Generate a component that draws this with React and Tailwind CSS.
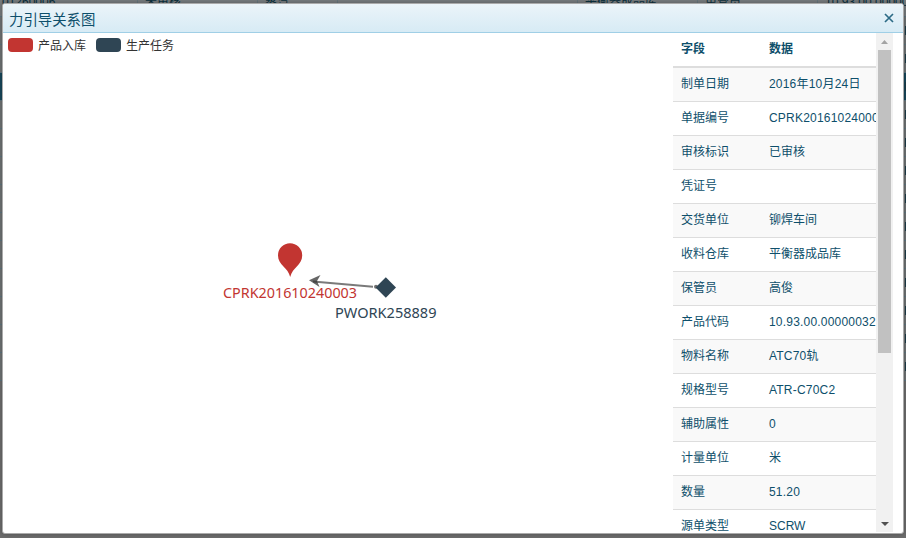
const rows = [
  ['制单日期', '2016年10月24日'],
  ['单据编号', 'CPRK201610240003'],
  ['审核标识', '已审核'],
  ['凭证号', ''],
  ['交货单位', '铆焊车间'],
  ['收料仓库', '平衡器成品库'],
  ['保管员', '高俊'],
  ['产品代码', '10.93.00.00000032'],
  ['物料名称', 'ATC70轨'],
  ['规格型号', 'ATR-C70C2'],
  ['辅助属性', '0'],
  ['计量单位', '米'],
  ['数量', '51.20'],
  ['源单类型', 'SCRW'],
];

// Dimmed page grid behind the dialog; the third full row is the selected one
function Backdrop() {
  const cell = 'h-[21px] shrink-0 border-r border-[#65757c] pl-[7px] whitespace-nowrap leading-[12px] -mt-[4px]';
  return (
    <div className="absolute inset-0 overflow-hidden bg-[#6d6d6d] text-[12px] text-[#0b2f3c]">
      <div className="flex h-[17px] border-b border-[#5c747f] bg-[#777c7e]">
        <div className={cell + ' w-[138px] !pl-[2px]'}>01260006</div>
        <div className={cell + ' w-[120px]'}>未审核</div>
        <div className={cell + ' w-[80px]'}>蒸汽</div>
        <div className={cell + ' w-[240px]'} />
        <div className={cell + ' w-[120px]'}>平衡器成品库</div>
        <div className={cell + ' w-[120px]'}>单管员</div>
        <div className={cell + ' w-[120px]'}>10.93.00.00000032</div>
      </div>
      {Array.from({ length: 13 }, (_, i) => (
        <div
          key={i}
          className={'flex h-[28px] items-center justify-end border-b border-[#5c747f] ' + (i === 2 ? 'bg-[#17475b]' : 'bg-[#6f7374]')}
        >
          <span className="h-[9px] w-px bg-[#1c3a46]" />
        </div>
      ))}
    </div>
  );
}

function Legend({ color, children }) {
  return (
    <div className="flex items-center gap-[5px]">
      <span className={'h-[14px] w-[25px] rounded-[4px] ' + color} />
      <span className="relative top-px w-[48px] whitespace-nowrap">{children}</span>
    </div>
  );
}

function Graph() {
  return (
    <svg className="block h-[278px] w-[670px] shrink-0 overflow-visible" viewBox="0 0 670 278" fontSize="15">
      <path d="M373 33.7 L313 28.4" stroke="#333" strokeOpacity="0.65" strokeWidth="2" fill="none" />
      <path d="M309 27.2 L320.5 22 L317 28 L319.5 34 Z" fill="#333" fillOpacity="0.75" />
      <circle cx="376" cy="33.8" r="2" fill="#333" fillOpacity="0.7" />
      <path
        d="M290 -9.8 A12.2 12.2 0 0 1 302.2 2.4 C302.2 12 292.5 14 290.2 24 C288 14 278 12 278 2.4 A12.2 12.2 0 0 1 290 -9.8 Z"
        fill="#c23531"
      />
      <path d="M385.8 24.2 L396 34.5 L385.8 44.8 L375.6 34.5 Z" fill="#2f4554" />
      <text x="223" y="45" fill="#c23531" textLength="134" lengthAdjust="spacingAndGlyphs">CPRK201610240003</text>
      <text x="335" y="65" fill="#2f4554" textLength="101.5" lengthAdjust="spacingAndGlyphs">PWORK258889</text>
    </svg>
  );
}

function Scrollbar() {
  return (
    <div className="flex w-[17px] shrink-0 flex-col items-center bg-[#f1f1f1]">
      <div className="flex h-[17px] items-center">
        <svg width="7" height="4" viewBox="0 0 7 4"><path d="M0 4 L3.5 0 L7 4Z" fill="#a3a3a3" /></svg>
      </div>
      <div className="h-[303px] w-[13px] bg-[#c1c1c1]" />
      <div className="mt-auto flex h-[17px] items-center">
        <svg width="8" height="4" viewBox="0 0 8 4"><path d="M0 0 L4 4 L8 0Z" fill="#505050" /></svg>
      </div>
    </div>
  );
}

export default function App() {
  return (
    <div className="relative h-[538px] w-[906px] overflow-hidden pt-[3px] pl-[2px] font-['Liberation_Sans','Noto_Sans_CJK_SC',sans-serif]">
      <Backdrop />
      <div className="relative flex h-[531px] w-[902px] flex-col overflow-hidden rounded-[3px] border border-[#aaa] bg-white shadow-[0_0_5px_rgba(0,0,0,0.3)]">
        <div className="flex h-[29px] shrink-0 items-center justify-between border-b border-[#a0cfe6] bg-linear-to-b from-[#ebf4f9] to-[#d7ebf5] pr-[9px] pl-[6px] text-[#0e4f6b]">
          <span className="pt-[3px] text-[14.4px] leading-[20px]">力引导关系图</span>
          <svg width="10" height="10" viewBox="0 0 10 10" fill="none" stroke="#2d6b86" strokeWidth="1.7">
            <path d="M1 1 L9 9 M9 1 L1 9" />
          </svg>
        </div>
        <div className="flex h-[499px] shrink-0">
          <div className="-ml-[3px] flex w-[673px] shrink-0 flex-col font-['Noto_Sans','Noto_Sans_CJK_SC',sans-serif]">
            <div className="flex h-[220px] shrink-0 items-start gap-[10px] pt-[3px] pl-[8px] text-[12px] leading-[18px] text-[#333]">
              <Legend color="bg-[#c23531]">产品入库</Legend>
              <Legend color="bg-[#2f4554]">生产任务</Legend>
            </div>
            <Graph />
          </div>
          <div className="w-[203px] shrink-0 overflow-hidden text-[12px] text-[#0e4f6b]">
            <div className="flex h-[35px] items-center border-b-2 border-[#ddd] pb-[2px] pl-[8px] font-bold">
              <span className="w-[88px]">字段</span>
              <span>数据</span>
            </div>
            {rows.map(([name, value], i) => (
              <div
                key={name}
                className={'flex h-[34px] items-center border-b border-[#ddd] pb-[2px] pl-[8px] whitespace-nowrap ' + (i % 2 ? 'bg-white' : 'bg-[#f9f9f9]')}
              >
                <span className="w-[88px] shrink-0">{name}</span>
                <span className={/[0-9]/.test(value) ? 'tracking-[0.2px]' : ''}>{value}</span>
              </div>
            ))}
          </div>
          <Scrollbar />
        </div>
      </div>
    </div>
  );
}
